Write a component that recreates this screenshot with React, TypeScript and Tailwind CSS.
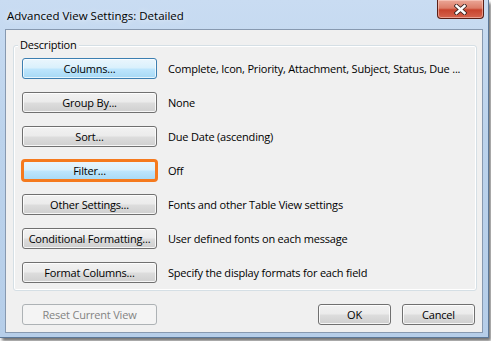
import React from 'react'

const btn =
  'h-[21px] w-[135px] shrink-0 whitespace-nowrap rounded-[3px] border border-[#707070] bg-[linear-gradient(to_bottom,#f2f2f2_0%,#ebebeb_48%,#dddddd_52%,#cfcfcf_100%)] shadow-[inset_0_0_0_1px_rgba(255,255,255,0.8)] text-[11px] tracking-[-0.2px] leading-none text-black'
const blueBtn =
  'h-[21px] w-[135px] shrink-0 whitespace-nowrap rounded-[3px] border border-[#3c7fb1] bg-[linear-gradient(to_bottom,#eaf6fd_0%,#d9f0fc_48%,#bee6fd_52%,#a7d9f5_100%)] shadow-[inset_0_0_0_1px_rgba(255,255,255,0.7)] text-[11px] tracking-[-0.2px] leading-none text-black'

const rows = [
  { label: 'Columns...', text: 'Complete, Icon, Priority, Attachment, Subject, Status, Due ...', kind: 'blue' },
  { label: 'Group By...', text: 'None', kind: 'normal' },
  { label: 'Sort...', text: 'Due Date (ascending)', kind: 'normal' },
  { label: 'Filter...', text: 'Off', kind: 'filter' },
  { label: 'Other Settings...', text: 'Fonts and other Table View settings', kind: 'normal' },
  { label: 'Conditional Formatting...', text: 'User defined fonts on each message', kind: 'normal' },
  { label: 'Format Columns...', text: 'Specify the display formats for each field', kind: 'normal' },
]

const App = () => {
  return (
    <div className="w-[491px] h-[341px] overflow-hidden bg-white font-['Open_Sans',sans-serif]">
      <div className="w-[489px] h-[338px] flex flex-col border-r border-b border-[#5c7898] bg-[linear-gradient(to_bottom,#c9dcf2,#bcd3ec_40%,#b6cee9)] shadow-[2px_3px_3px_rgba(0,0,0,0.55)]">
        {/* title bar */}
        <div className="h-[29px] flex items-start shrink-0">
          <div className="pl-[7px] pt-[8px] text-[11.5px] leading-[16px] text-black [text-shadow:0_0_6px_rgba(255,255,255,0.9)]">
            Advanced View Settings: Detailed
          </div>
          <div className="ml-auto mr-[4px] w-[47px] h-[19px] flex items-center justify-center rounded-b-[4px] border border-t-0 border-[#5a1f16] bg-[linear-gradient(to_bottom,#eba797_0%,#dc7d68_45%,#c8432d_55%,#d5644e_100%)] shadow-[inset_0_0_0_1px_rgba(255,220,210,0.5)]">
            <svg width="13" height="11" viewBox="0 0 13 11">
              <path d="M2.5 2 L10.5 9 M10.5 2 L2.5 9" stroke="#3a2320" strokeWidth="4.2" strokeLinecap="square" />
              <path d="M2.5 2 L10.5 9 M10.5 2 L2.5 9" stroke="#ffffff" strokeWidth="2.4" strokeLinecap="square" />
            </svg>
          </div>
        </div>
        {/* client area */}
        <div className="mx-[5px] h-[304px] border border-[#8799b0] bg-[#f0f0f0] flex flex-col pl-[7px] pr-[7px] pt-[15px]">
          <div className="relative h-[246px] w-[464px] rounded-[3px] border border-[#d5dfe5] shadow-[inset_0_0_0_1px_#ffffff] pt-[12px] pl-[8px] flex flex-col gap-[13px]">
            <span className="absolute left-[4px] top-[-9px] bg-[#f0f0f0] px-[2px] text-[11px] tracking-[-0.2px] leading-[16px] text-black">
              Description
            </span>
            {rows.map((r) => (
              <div key={r.label} className="flex items-center gap-[11px]">
                <button
                  className={
                    r.kind === 'normal'
                      ? btn
                      : r.kind === 'blue'
                        ? blueBtn
                        : blueBtn + ' outline-[3px] outline-solid outline-[#f57a1e] outline-offset-[-2px]'
                  }
                >
                  {r.label}
                </button>
                <span className="text-[11px] tracking-[-0.2px] leading-none text-black whitespace-nowrap">{r.text}</span>
              </div>
            ))}
          </div>
          <div className="flex mt-[13px] pl-[9px]">
            <button className="h-[21px] w-[135px] whitespace-nowrap rounded-[3px] border border-[#adb2b5] bg-[#f4f4f4] text-[11px] tracking-[-0.2px] leading-none text-[#838383]">
              Reset Current View
            </button>
            <button className={btn + ' !w-[73px] ml-auto'}>OK</button>
            <button className={btn + ' !w-[73px] ml-[11px]'}>Cancel</button>
          </div>
        </div>
      </div>
    </div>
  )
}

export default App
